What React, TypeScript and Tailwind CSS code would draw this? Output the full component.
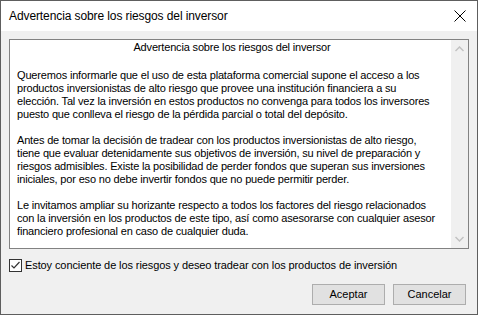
import React from "react";

export default function App() {
  const f = { fontFamily: '"Liberation Sans", Arial, sans-serif' };
  return (
    <div className="w-[478px] h-[315px] bg-[#f0f0f0] border border-[#5e5e5e] flex flex-col overflow-hidden" style={f}>
      <div className="h-[30px] bg-white flex items-center justify-between pl-[8px] pr-[9px] shrink-0">
        <span className="text-[12px] text-black tracking-[-0.1px]">Advertencia sobre los riesgos del inversor</span>
        <svg width="12" height="12" viewBox="0 0 12 12" className="mr-[2px]">
          <path d="M0.5 0.5L11.5 11.5M11.5 0.5L0.5 11.5" stroke="#000" strokeWidth="1" />
        </svg>
      </div>
      <div className="flex-1 flex flex-col px-[8px] pt-[8px]">
        <div className="h-[210px] bg-white border border-[#828282] flex">
          <div className="flex-1 pl-[7px] pr-[4px] pt-[1px] text-[11px] leading-[13px] text-black tracking-[-0.17px] whitespace-nowrap">
            <p className="text-center">Advertencia sobre los riesgos del inversor</p>
            <p className="mt-[15px]">
              Queremos informarle que el uso de esta plataforma comercial supone el acceso a los<br />
              productos inversionistas de alto riesgo que provee una institución financiera a su<br />
              elección. Tal vez la inversión en estos productos no convenga para todos los inversores<br />
              puesto que conlleva el riesgo de la pérdida parcial o total del depósito.
            </p>
            <p className="mt-[13px]">
              Antes de tomar la decisión de tradear con los productos inversionistas de alto riesgo,<br />
              tiene que evaluar detenidamente sus objetivos de inversión, su nivel de preparación y<br />
              riesgos admisibles. Existe la posibilidad de perder fondos que superan sus inversiones<br />
              iniciales, por eso no debe invertir fondos que no puede permitir perder.
            </p>
            <p className="mt-[13px]">
              Le invitamos ampliar su horizante respecto a todos los factores del riesgo relacionados<br />
              con la inversión en los productos de este tipo, así como asesorarse con cualquier asesor<br />
              financiero profesional en caso de cualquier duda.
            </p>
          </div>
          <div className="w-[17px] bg-[#f0f0f0] flex flex-col justify-between items-center py-[6px]">
            <svg width="9" height="6" viewBox="0 0 9 6">
              <path d="M0.5 5L4.5 1L8.5 5" stroke="#c2c2c2" strokeWidth="1.5" fill="none" />
            </svg>
            <svg width="9" height="6" viewBox="0 0 9 6">
              <path d="M0.5 1L4.5 5L8.5 1" stroke="#c2c2c2" strokeWidth="1.5" fill="none" />
            </svg>
          </div>
        </div>
        <div className="flex items-center mt-[10px] h-[13px]">
          <div className="w-[13px] h-[13px] border border-[#333] bg-white flex items-center justify-center">
            <svg width="11" height="11" viewBox="0 0 11 11">
              <path d="M1.5 5.5L4 8L9.5 2" stroke="#333" strokeWidth="1.2" fill="none" />
            </svg>
          </div>
          <span className="ml-[3px] text-[11px] text-black tracking-[-0.1px]">Estoy conciente de los riesgos y deseo tradear con los productos de inversión</span>
        </div>
        <div className="flex justify-end gap-[8px] mt-[12px] pr-[3px]">
          <button className="w-[73px] h-[21px] bg-[#e1e1e1] border border-[#adadad] text-[11px] text-black">Aceptar</button>
          <button className="w-[73px] h-[21px] bg-[#e1e1e1] border border-[#adadad] text-[11px] text-black">Cancelar</button>
        </div>
      </div>
    </div>
  );
}
